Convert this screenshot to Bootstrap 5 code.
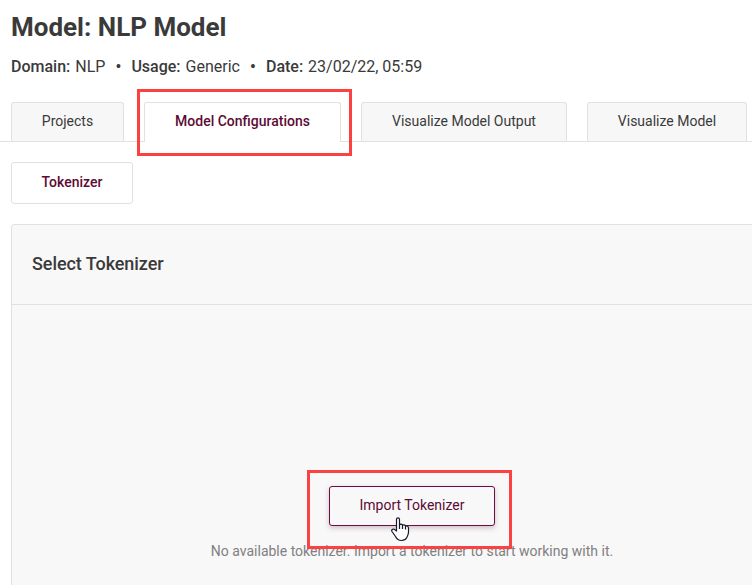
<!DOCTYPE html>
<html lang="en">
<head>
<meta charset="utf-8">
<meta name="viewport" content="width=device-width, initial-scale=1">
<title>Model: NLP Model</title>
<link href="https://cdn.jsdelivr.net/npm/bootstrap@5.3.0/dist/css/bootstrap.min.css" rel="stylesheet">
<style>
body{font-family:Roboto,sans-serif;color:#3a3a3a;font-size:14px;line-height:20px;background:#fff;overflow:hidden}
.page{height:585px}
.title{font-size:26px;line-height:32px;font-weight:700;padding:11px 0 0 11px}
.meta{font-size:16px;line-height:24px;padding:12px 0 0 11px;font-weight:400;white-space:pre}
.meta b{font-weight:500;margin-right:1px}
.meta .dot{width:26px;text-align:center;font-weight:700}
.model-tabs{margin-top:23px;padding-left:11px;gap:20px;border-bottom:1px solid #e1e1e1;height:40px}
.model-tabs .nav-link{height:39px;padding:8px 0 0;border:1px solid #e1e1e1;border-bottom:0;border-radius:3px 3px 0 0;background:#f7f7f7;color:#3a3a3a;text-align:center;white-space:nowrap}
.model-tabs .nav-link.active{height:40px;background:#fff;color:#5d0b35;font-weight:500}
.w-a{width:113px}.w-b{width:197px}.w-c{width:206px}.w-d{width:160px}
.sub-tab{width:122px;height:42px;margin:20px 0 0 11px;border:1px solid #e1e1e1;border-radius:3px;padding:0 0 2px;color:#5d0b35;font-size:14px;font-weight:500;background:#fff}
.panel{margin:20px -10px 0 11px;border:1px solid #e1e1e1;border-radius:3px;background:#f8f8f8;height:400px}
.panel-head{height:80px;border-bottom:1px solid #e1e1e1;padding:0 0 2px 20px;font-size:18px;font-weight:500;letter-spacing:-.06px}
.empty{padding-top:181px;width:800px}
.import{width:166px;height:40px;padding:0 0 2px;border:1px solid #6a0f40;border-radius:3px;color:#5d0b35;background:#f8f8f8;font-size:14px;box-shadow:0 2px 5px rgba(93,11,53,.25)}
.hint{color:#808080;margin-top:15px}
.marker{position:absolute;border:3px solid #fb4141;pointer-events:none}
.marker-tab{left:137px;top:89px;width:215px;height:67px}
.marker-import{left:307px;top:470px;width:205px;height:79px}
.pointer{position:absolute;left:391px;top:517px}
</style>
<script src="https://cdn.jsdelivr.net/npm/bootstrap@5.3.0/dist/js/bootstrap.bundle.min.js"></script>
</head>
<body>
<div class="page position-relative overflow-hidden">
  <h1 class="title m-0">Model: NLP Model</h1>
  <div class="meta d-flex"><span><b>Domain:</b> NLP</span><span class="dot">•</span><span><b>Usage:</b> Generic</span><span class="dot">•</span><span><b>Date:</b> 23/02/22, 05:59</span></div>
  <nav class="model-tabs nav flex-nowrap">
    <a class="nav-link w-a" href="#">Projects</a>
    <a class="nav-link w-b active" href="#">Model Configurations</a>
    <a class="nav-link w-c" href="#">Visualize Model Output</a>
    <a class="nav-link w-d" href="#">Visualize Model</a>
  </nav>
  <button class="sub-tab btn d-block">Tokenizer</button>
  <section class="panel">
    <div class="panel-head d-flex align-items-center">Select Tokenizer</div>
    <div class="empty d-flex flex-column align-items-center">
      <button class="import btn">Import Tokenizer</button>
      <div class="hint">No available tokenizer. Import a tokenizer to start working with it.</div>
    </div>
  </section>
  <div class="marker marker-tab"></div>
  <div class="marker marker-import"></div>
  <svg class="pointer" width="19" height="25" viewBox="0 0 19 25"><path d="M5.5 14V2.5C5.5.2 8.5.2 8.5 2.5V8C9.5 6.6 11.3 7 11.5 8.4C12.5 7.4 14.3 7.8 14.5 9.3C15.8 8.6 17.5 9.2 17.5 11V15C17.5 18 16.5 19 15.8 20.5C14.8 22.5 13 23.5 10.5 23.5C7 23.5 5.5 21.5 4.5 19.5L1 14.5C.1 12.8 1.6 11.5 3.2 12.3Z" fill="#fff" stroke="#17172b" stroke-width="1.2" stroke-linejoin="round"/><path d="M8.5 7.5V12M11.5 8.5V12M14.5 9.5V12.5" fill="none" stroke="#17172b" stroke-width="1.2"/></svg>
</div>
</body>
</html>
